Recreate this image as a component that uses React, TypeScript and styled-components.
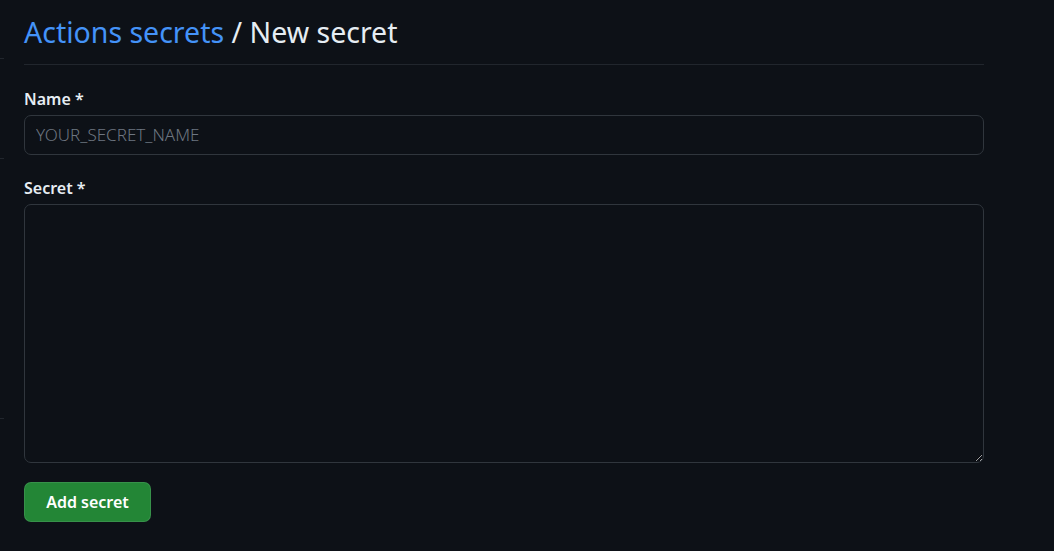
import React from 'react';
import styled, { createGlobalStyle } from 'styled-components';

const GlobalStyle = createGlobalStyle`
  html, body {
    margin: 0;
    padding: 0;
    background: #0d1117;
  }
  body {
    font-family: "Noto Sans", "Liberation Sans", sans-serif;
    color: #e6edf3;
  }
`;

const Page = styled.div`
  display: flex;
  min-height: 100vh;
  background: #0d1117;
`;

const Sidebar = styled.div`
  width: 4px;
  display: flex;
  flex-direction: column;
`;

const SideItem = styled.div<{ $h: number }>`
  height: ${(p) => p.$h}px;
  border-bottom: 1px solid #21262d;
  flex-shrink: 0;
`;

const Main = styled.main`
  width: 960px;
  margin-left: 20px;
  display: flex;
  flex-direction: column;
`;

const Subhead = styled.div`
  padding: 14px 0 12px;
  border-bottom: 1px solid #21262d;
`;

const Heading = styled.h2`
  margin: 0;
  font-size: 28.5px;
  font-weight: 400;
  line-height: 37.5px;
  color: #e6edf3;
  white-space: nowrap;
`;

const Crumb = styled.a`
  color: #4493f8;
  text-decoration: none;
`;

const FormGroup = styled.div<{ $top: number }>`
  margin-top: ${(p) => p.$top}px;
  display: flex;
  flex-direction: column;
`;

const Label = styled.label`
  font-size: 16px;
  font-weight: 600;
  line-height: 26px;
  color: #e6edf3;
  margin-bottom: 3px;
`;

const Input = styled.input`
  box-sizing: border-box;
  height: 40px;
  width: 100%;
  padding: 0 11px;
  font-family: inherit;
  font-size: 17px;
  font-weight: 300;
  color: #e6edf3;
  background: #0d1117;
  border: 1px solid #30363d;
  border-radius: 7px;
  outline: none;
  &::placeholder {
    color: #6e7681;
  }
`;

const TextArea = styled.textarea`
  box-sizing: border-box;
  height: 259px;
  width: 100%;
  padding: 10px 11px;
  font-family: inherit;
  font-size: 17px;
  color: #e6edf3;
  background: #0d1117;
  border: 1px solid #30363d;
  border-radius: 7px;
  outline: none;
  resize: vertical;
  color-scheme: dark;
`;

const Actions = styled.div`
  margin-top: 19px;
  display: flex;
`;

const Button = styled.button`
  box-sizing: border-box;
  height: 40px;
  width: 127px;
  padding: 0;
  white-space: nowrap;
  font-family: inherit;
  font-size: 16px;
  font-weight: 600;
  color: #ffffff;
  background: #238636;
  border: 1px solid rgba(240, 246, 252, 0.1);
  border-radius: 7px;
  cursor: pointer;
`;

export default function App() {
  return (
    <>
      <GlobalStyle />
      <Page>
        <Sidebar>
          <SideItem $h={58} />
          <SideItem $h={99} />
          <SideItem $h={259} />
        </Sidebar>
        <Main>
          <Subhead>
            <Heading>
              <Crumb href="#">Actions secrets</Crumb> / New secret
            </Heading>
          </Subhead>
          <FormGroup $top={21}>
            <Label htmlFor="secret-name">Name *</Label>
            <Input id="secret-name" placeholder="YOUR_SECRET_NAME" />
          </FormGroup>
          <FormGroup $top={20}>
            <Label htmlFor="secret-value">Secret *</Label>
            <TextArea id="secret-value" />
          </FormGroup>
          <Actions>
            <Button type="button">Add secret</Button>
          </Actions>
        </Main>
      </Page>
    </>
  );
}
